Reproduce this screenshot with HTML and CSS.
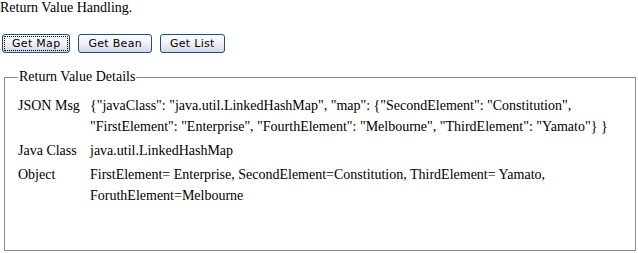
FILE: index.html
```html
<!DOCTYPE html>
<html lang="en">
  <head>
    <meta charset="UTF-8" />
    <title>Return Value Handling</title>
    <link rel="stylesheet" href="styles.css">
  </head>
  <body>
    <div class="page">
      <div class="title">Return Value Handling.</div>

      <div class="actions">
        <button class="focused">Get Map</button>
        <button>Get Bean</button>
        <button>Get List</button>
      </div>

      <fieldset class="details-box">
        <legend>Return Value Details</legend>
        <table class="details">
          <tr>
            <td class="label">JSON Msg</td>
            <td>{"javaClass": "java.util.LinkedHashMap", "map": {"SecondElement": "Constitution", "FirstElement": "Enterprise", "FourthElement": "Melbourne", "ThirdElement": "Yamato"} }</td>
          </tr>
          <tr>
            <td class="label">Java Class</td>
            <td>java.util.LinkedHashMap</td>
          </tr>
          <tr>
            <td class="label">Object</td>
            <td>FirstElement= Enterprise, SecondElement=Constitution, ThirdElement= Yamato, ForuthElement=Melbourne</td>
          </tr>
        </table>
      </fieldset>
    </div>
  </body>
</html>
```

FILE: styles.css
```css
body { margin: 0; }
.page { font-family: "Liberation Serif"; font-size: 14px; color: #000; }
.title { line-height: 16px; }

.actions {
  margin-top: 18px;
  margin-left: 2px;
  display: flex;
  gap: 8px;
}

.actions button {
  font-family: "DejaVu Sans";
  font-size: 11px;
  letter-spacing: 0.3px;
  height: 19px;
  padding: 0 9px;
  border: 1px solid #1e4f86;
  border-radius: 3px;
  background: linear-gradient(#ffffff, #ecebf3 60%, #d6d4e2);
  color: #000;
}

.actions button.focused {
  outline: 1px dotted #000;
  outline-offset: -3px;
}

.details-box {
  margin: 16px 2px 0 4px;
  padding: 4px 10px 0 11px;
  border: 1px solid #8c8c8c;
  height: 182px;
  box-sizing: border-box;
}

.details-box legend {
  padding: 0 1px;
  margin-left: 2px;
  line-height: 16px;
}

.details {
  font-family: "Liberation Serif";
  font-size: 14px;
  border-spacing: 0 1px;
  margin-top: 4px;
}

.details td {
  padding: 1px 2px;
  line-height: 21px;
  vertical-align: top;
}

.details td.label {
  white-space: nowrap;
  width: 68px;
}
```
